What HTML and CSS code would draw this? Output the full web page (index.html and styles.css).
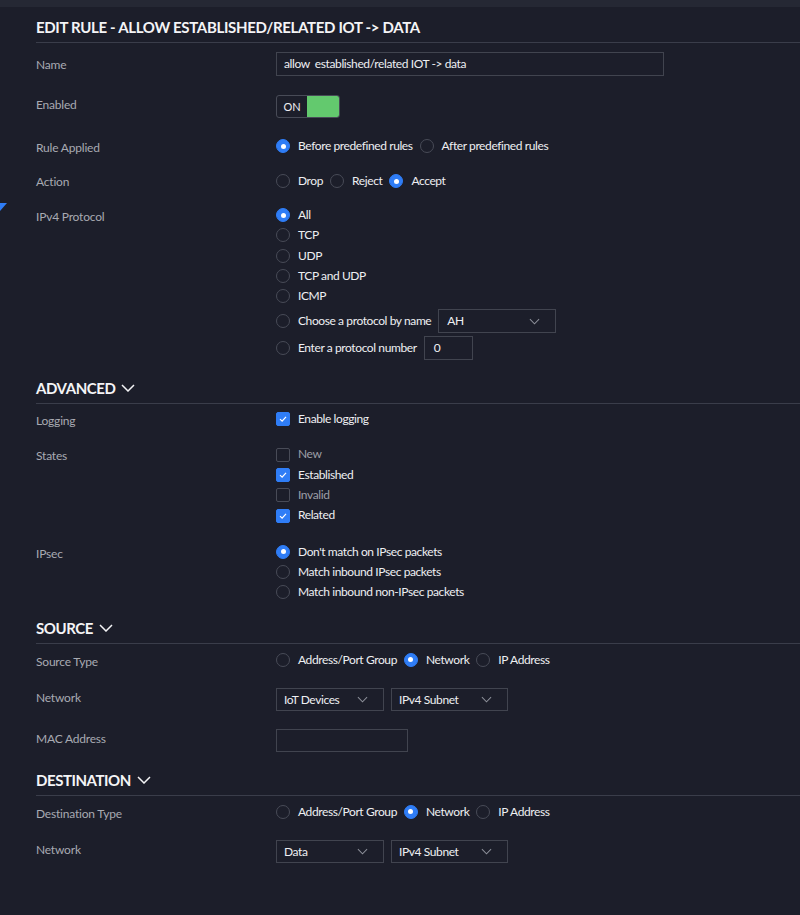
FILE: index.html
```html
<!DOCTYPE html>
<html lang="en">
<head>
  <meta charset="UTF-8">
  <title>Edit Rule</title>
  <link rel="stylesheet" href="styles.css">
</head>
<body>
  <div class="topbar"></div>
  <span class="edge-marker"></span>

  <main class="panel">
    <h1 class="panel-title">EDIT RULE - ALLOW ESTABLISHED/RELATED IOT -&gt; DATA</h1>

    <div class="row row-name">
      <div class="row-label">Name</div>
      <div class="row-control">
        <div class="field field-name">allow&nbsp; established/related IOT -&gt; data</div>
      </div>
    </div>

    <div class="row row-enabled">
      <div class="row-label">Enabled</div>
      <div class="row-control">
        <div class="toggle"><span class="toggle-text">ON</span><span class="toggle-knob"></span></div>
      </div>
    </div>

    <div class="row row-rule">
      <div class="row-label">Rule Applied</div>
      <div class="row-control inline">
        <label class="option"><span class="radio is-checked"></span>Before predefined rules</label>
        <label class="option"><span class="radio"></span>After predefined rules</label>
      </div>
    </div>

    <div class="row row-action">
      <div class="row-label">Action</div>
      <div class="row-control inline">
        <label class="option"><span class="radio"></span>Drop</label>
        <label class="option"><span class="radio"></span>Reject</label>
        <label class="option"><span class="radio is-checked"></span>Accept</label>
      </div>
    </div>

    <div class="row row-protocol">
      <div class="row-label">IPv4 Protocol</div>
      <div class="row-control stack">
        <label class="option"><span class="radio is-checked"></span>All</label>
        <label class="option"><span class="radio"></span>TCP</label>
        <label class="option"><span class="radio"></span>UDP</label>
        <label class="option"><span class="radio"></span>TCP and UDP</label>
        <label class="option"><span class="radio"></span>ICMP</label>
        <div class="option option-field">
          <span class="radio"></span>Choose a protocol by name
          <div class="select select-protocol"><span>AH</span><svg class="chevron" viewBox="0 0 12 7"><polyline points="1,1 6,6 11,1"/></svg></div>
        </div>
        <div class="option option-field">
          <span class="radio"></span>Enter a protocol number
          <div class="field field-number">0</div>
        </div>
      </div>
    </div>

    <h2 class="section-title section-advanced">ADVANCED <svg class="section-chevron" viewBox="0 0 14 8"><polyline points="1,1 7,7 13,1"/></svg></h2>

    <div class="row row-logging">
      <div class="row-label">Logging</div>
      <div class="row-control">
        <label class="option"><span class="check is-checked"><svg viewBox="0 0 14 14"><polyline points="3.5,7.2 6,9.6 10.5,4.6"/></svg></span>Enable logging</label>
      </div>
    </div>

    <div class="row row-states">
      <div class="row-label">States</div>
      <div class="row-control stack">
        <label class="option is-muted"><span class="check"></span>New</label>
        <label class="option"><span class="check is-checked"><svg viewBox="0 0 14 14"><polyline points="3.5,7.2 6,9.6 10.5,4.6"/></svg></span>Established</label>
        <label class="option is-muted"><span class="check"></span>Invalid</label>
        <label class="option"><span class="check is-checked"><svg viewBox="0 0 14 14"><polyline points="3.5,7.2 6,9.6 10.5,4.6"/></svg></span>Related</label>
      </div>
    </div>

    <div class="row row-ipsec">
      <div class="row-label">IPsec</div>
      <div class="row-control stack">
        <label class="option"><span class="radio is-checked"></span>Don't match on IPsec packets</label>
        <label class="option"><span class="radio"></span>Match inbound IPsec packets</label>
        <label class="option"><span class="radio"></span>Match inbound non-IPsec packets</label>
      </div>
    </div>

    <h2 class="section-title section-source">SOURCE <svg class="section-chevron" viewBox="0 0 14 8"><polyline points="1,1 7,7 13,1"/></svg></h2>

    <div class="row row-type">
      <div class="row-label">Source Type</div>
      <div class="row-control inline">
        <label class="option"><span class="radio"></span>Address/Port Group</label>
        <label class="option"><span class="radio is-checked"></span>Network</label>
        <label class="option"><span class="radio"></span>IP Address</label>
      </div>
    </div>

    <div class="row row-network">
      <div class="row-label">Network</div>
      <div class="row-control inline selects">
        <div class="select select-net"><span>IoT Devices</span><svg class="chevron" viewBox="0 0 12 7"><polyline points="1,1 6,6 11,1"/></svg></div>
        <div class="select select-subnet"><span>IPv4 Subnet</span><svg class="chevron" viewBox="0 0 12 7"><polyline points="1,1 6,6 11,1"/></svg></div>
      </div>
    </div>

    <div class="row row-mac">
      <div class="row-label">MAC Address</div>
      <div class="row-control">
        <div class="field field-mac"></div>
      </div>
    </div>

    <h2 class="section-title section-destination">DESTINATION <svg class="section-chevron" viewBox="0 0 14 8"><polyline points="1,1 7,7 13,1"/></svg></h2>

    <div class="row row-type">
      <div class="row-label">Destination Type</div>
      <div class="row-control inline">
        <label class="option"><span class="radio"></span>Address/Port Group</label>
        <label class="option"><span class="radio is-checked"></span>Network</label>
        <label class="option"><span class="radio"></span>IP Address</label>
      </div>
    </div>

    <div class="row row-network">
      <div class="row-label">Network</div>
      <div class="row-control inline selects">
        <div class="select select-net"><span>Data</span><svg class="chevron" viewBox="0 0 12 7"><polyline points="1,1 6,6 11,1"/></svg></div>
        <div class="select select-subnet"><span>IPv4 Subnet</span><svg class="chevron" viewBox="0 0 12 7"><polyline points="1,1 6,6 11,1"/></svg></div>
      </div>
    </div>
  </main>
</body>
</html>
```

FILE: styles.css
```css
* {
  box-sizing: border-box;
}

body {
  margin: 0;
  font-family: "Lato", "Open Sans", sans-serif;
  font-size: 12px;
  background-color: #1c1e2a;
  color: #eeeff2;
  min-height: 915px;
  position: relative;
}

.topbar {
  height: 7px;
  background: #252834;
}

.edge-marker {
  position: absolute;
  left: 0;
  top: 203px;
  width: 0;
  height: 0;
  border-top: 8px solid #2f7df6;
  border-right: 7px solid transparent;
}

.panel {
  padding-left: 36px;
}

.panel-title {
  margin: 0;
  padding: 10px 0 5px;
  font-size: 15px;
  line-height: 20px;
  font-weight: 700;
  letter-spacing: -0.33px;
  color: #f4f4f6;
  border-bottom: 1px solid #3a3d4a;
}

.section-title {
  margin: 18px 0 0;
  padding-bottom: 5px;
  font-size: 15px;
  line-height: 20px;
  font-weight: 700;
  letter-spacing: -0.45px;
  color: #f4f4f6;
  border-bottom: 1px solid #3a3d4a;
  display: flex;
  align-items: center;
  gap: 6px;
}

.section-source { margin-top: 15px; }

.section-chevron {
  width: 14px;
  height: 8px;
  fill: none;
  stroke: #f4f4f6;
  stroke-width: 1.5;
}

/* rows */

.row {
  display: flex;
  align-items: flex-start;
  margin-top: 15px;
}

.row-label {
  width: 240px;
  flex: none;
  color: #a8aab2;
  line-height: 20px;
  letter-spacing: -0.2px;
  padding-top: 2px;
  margin-bottom: -2px;
}

.row-name { margin-top: 9px; }
.row-name .row-label { padding-top: 3px; }
.row-enabled { margin-top: 19px; }
.row-enabled .row-label { padding-top: 0; margin-bottom: 0; }
.row-rule { margin-top: 18px; }
.row-action .row-label { padding-top: 1px; margin-bottom: -1px; }
.row-protocol { margin-top: 14px; }
.row-logging { margin-top: 5px; }
.row-ipsec { margin-top: 16px; }
.row-type { margin-top: 6px; }
.row-network { margin-top: 18px; }
.row-network .row-label { padding-top: 0; margin-bottom: 0; }
.row-mac { margin-top: 18px; }
.row-mac .row-label { padding-top: 0; margin-bottom: 0; }

.inline {
  display: flex;
  align-items: center;
}

.stack {
  display: flex;
  flex-direction: column;
}

.stack .option {
  line-height: 20.3px;
}

.selects {
  gap: 7px;
}

/* radios and checks */

.option {
  display: inline-flex;
  align-items: center;
  gap: 8px;
  line-height: 20px;
  margin-right: 7px;
  letter-spacing: -0.4px;
  color: #eeeff2;
}

.option.is-muted {
  color: #9c9ea7;
}

.stack .option-field {
  margin-top: 3px;
  line-height: 20px;
}

.radio {
  width: 14px;
  height: 14px;
  flex: none;
  border: 1px solid #484b57;
  border-radius: 50%;
  display: inline-flex;
  align-items: center;
  justify-content: center;
}

.radio.is-checked {
  background: #2f7df6;
  border-color: #2f7df6;
}

.radio.is-checked::after {
  content: "";
  width: 5px;
  height: 5px;
  border-radius: 50%;
  background: #fff;
}

.check {
  width: 14px;
  height: 14px;
  flex: none;
  border: 1px solid #484b57;
  border-radius: 2px;
  display: inline-flex;
}

.check.is-checked {
  background: #2f7df6;
  border-color: #2f7df6;
}

.check svg {
  width: 12px;
  height: 12px;
  fill: none;
  stroke: #fff;
  stroke-width: 1.4;
}

/* fields */

.field {
  height: 24px;
  border: 1px solid #41444f;
  padding: 0 7px;
  line-height: 22px;
  letter-spacing: -0.4px;
  color: #eeeff2;
}

.field-name { width: 388px; }
.field-number { width: 49px; padding-left: 9px; margin-left: -1px; }
.field-mac { width: 132px; height: 23px; }

.toggle {
  display: flex;
  width: 64px;
  height: 23px;
  border: 1px solid #484b57;
  border-radius: 3px;
  overflow: hidden;
}

.toggle-text {
  width: 30px;
  text-align: center;
  font-size: 11px;
  line-height: 21px;
  color: #eeeff2;
}

.toggle-knob {
  flex: 1;
  background: #63c96e;
}

.select {
  height: 24px;
  border: 1px solid #41444f;
  padding: 0 15px 0 7px;
  display: flex;
  align-items: center;
  justify-content: space-between;
  letter-spacing: -0.4px;
  color: #eeeff2;
}

.select-protocol { width: 118px; margin-left: -1px; padding-left: 8px; }
.select-net { width: 108px; height: 23px; }
.select-subnet { width: 117px; height: 23px; }

.chevron {
  width: 11px;
  height: 7px;
  fill: none;
  stroke: #8d909a;
  stroke-width: 1.1;
}
```
